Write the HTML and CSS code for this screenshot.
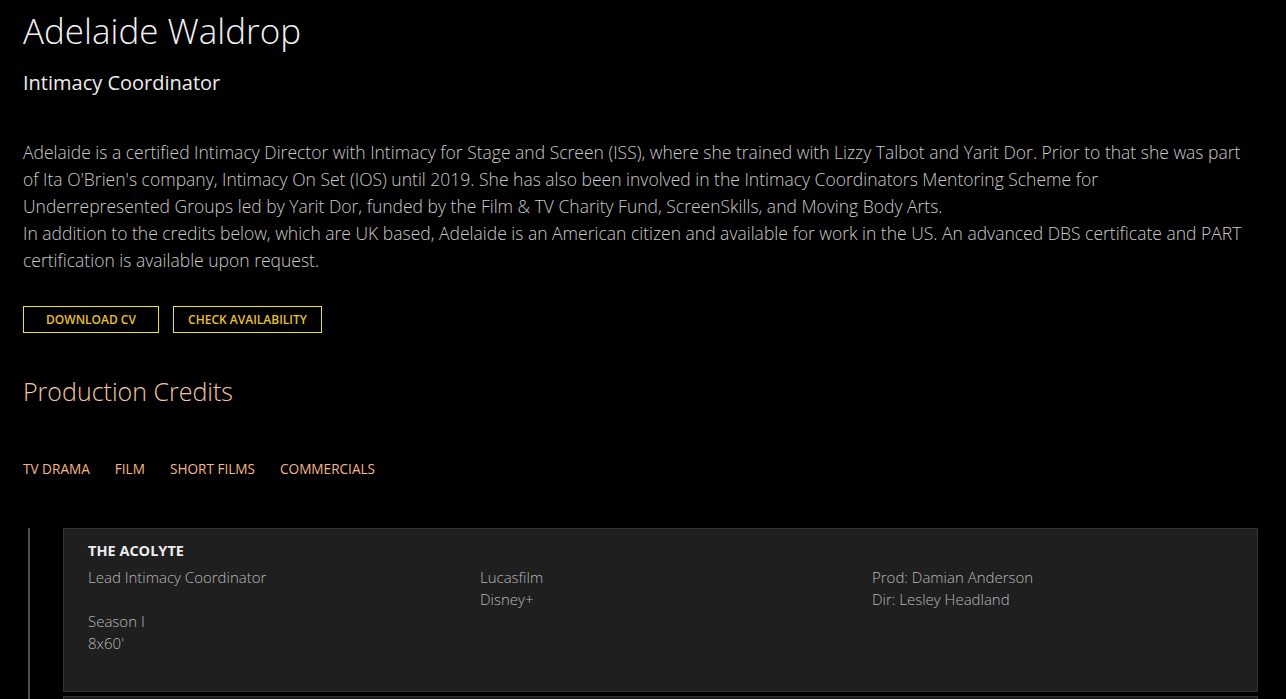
FILE: index.html
```html
<!DOCTYPE html>
<html>
<head>
<meta charset="utf-8">
<link rel="stylesheet" href="styles.css">
</head>
<body>
<div class="page">
  <h1 class="name">Adelaide Waldrop</h1>
  <h2 class="role">Intimacy Coordinator</h2>
  <p class="bio">Adelaide is a certified Intimacy Director with Intimacy for Stage and Screen (ISS), where she trained with Lizzy Talbot and Yarit Dor. Prior to that she was part<br>of Ita O'Brien's company, Intimacy On Set (IOS) until 2019. She has also been involved in the Intimacy Coordinators Mentoring Scheme for<br>Underrepresented Groups led by Yarit Dor, funded by the Film &amp; TV Charity Fund, ScreenSkills, and Moving Body Arts.<br>In addition to the credits below, which are UK based, Adelaide is an American citizen and available for work in the US. An advanced DBS certificate and PART<br>certification is available upon request.</p>
  <div class="buttons">
    <a class="btn btn-cv">DOWNLOAD CV</a>
    <a class="btn btn-av">CHECK AVAILABILITY</a>
  </div>
  <h2 class="credits-title">Production Credits</h2>
  <nav class="tabs">
    <a class="tab">TV DRAMA</a>
    <a class="tab">FILM</a>
    <a class="tab">SHORT FILMS</a>
    <a class="tab">COMMERCIALS</a>
  </nav>
  <div class="timeline">
    <div class="card">
      <div class="card-title">THE ACOLYTE</div>
      <div class="card-cols">
        <div class="col">Lead Intimacy Coordinator<br><br>Season I<br>8x60'</div>
        <div class="col">Lucasfilm<br>Disney+</div>
        <div class="col">Prod: Damian Anderson<br>Dir: Lesley Headland</div>
      </div>
    </div>
    <div class="card">
      <div class="card-title">&nbsp;</div>
    </div>
  </div>
</div>
</body>
</html>
```

FILE: styles.css
```css
html, body {
  margin: 0;
  padding: 0;
  background: #000;
  overflow: hidden;
}
body {
  font-family: "Open Sans", "Liberation Sans", sans-serif;
  font-weight: 300;
  color: #fff;
}
.page {
  padding: 0 23px;
}
.name {
  margin: 0;
  padding-top: 9px;
  font-size: 35px;
  font-weight: 300;
  line-height: 44px;
  color: #f2f2f2;
}
.role {
  margin: 16px 0 0;
  font-size: 20px;
  font-weight: 400;
  line-height: 28px;
  color: #ececec;
}
.bio {
  margin: 42px 0 0;
  font-size: 17.5px;
  line-height: 27px;
  white-space: nowrap;
  color: #cbcbcb;
}
.buttons {
  display: flex;
  gap: 14px;
  margin-top: 32px;
}
.btn {
  display: block;
  box-sizing: border-box;
  height: 27px;
  line-height: 25px;
  border: 1px solid #f2e60a;
  font-size: 12px;
  font-weight: 600;
  color: #e8c12a;
  text-align: center;
}
.btn-cv { width: 136px; }
.btn-av { width: 149px; }
.credits-title {
  margin: 42px 0 0;
  font-size: 25px;
  font-weight: 300;
  line-height: 32px;
  color: #f3c7a4;
}
.tabs {
  display: flex;
  gap: 25px;
  margin-top: 52px;
}
.tab {
  font-size: 13.6px;
  font-weight: 400;
  line-height: 20px;
  color: #f5b68c;
}
.timeline {
  margin-top: 49px;
  margin-left: 5px;
  margin-right: 5px;
  border-left: 2px solid #4f4f4f;
  padding-left: 33px;
  display: flex;
  flex-direction: column;
  gap: 4px;
}
.card {
  background: #1f1f1f;
  border: 1px solid #333;
  padding: 12px 24px 26px;
  min-height: 124px;
}
.card-title {
  font-size: 14.5px;
  font-weight: 700;
  line-height: 20px;
  color: #ececec;
}
.card-cols {
  display: grid;
  grid-template-columns: 392px 392px 1fr;
  margin-top: 5px;
}
.col {
  font-size: 15px;
  line-height: 22px;
  color: #b8b8b8;
}
```
